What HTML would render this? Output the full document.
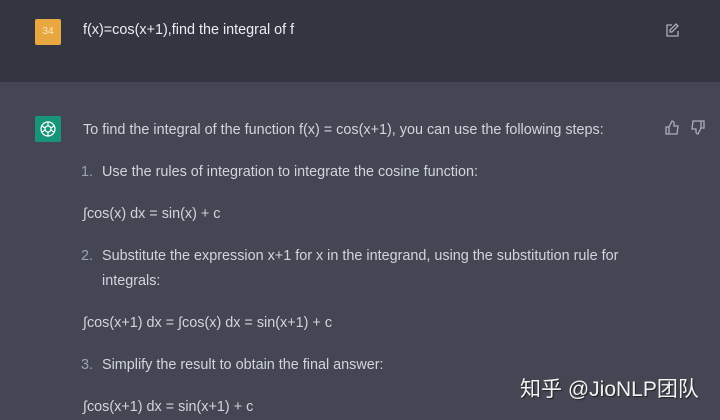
<!DOCTYPE html>
<html><head><style>
body{margin:0;width:720px;height:420px;overflow:hidden;font-family:"Liberation Sans",sans-serif;color:#d1d5db;font-size:14.4px;}
.top{position:absolute;left:0;top:0;width:720px;height:82px;background:#343541;}
.bot{position:absolute;left:0;top:82px;width:720px;height:338px;background:#444654;}
.av{position:absolute;width:26px;height:26px;border-radius:2px;}
.t{position:absolute;left:83px;white-space:nowrap;}
.n{position:absolute;left:81px;color:#9ca3af;}
.wm{position:absolute;left:520px;top:373px;font-size:21px;color:#f2f2f2;font-family:"Liberation Sans","Noto Sans CJK SC",sans-serif;text-shadow:1px 1px 1px #222;}
</style></head><body>
<div class="top"></div><div class="bot"></div>
<div class="av" style="left:35px;top:19px;background:#e9a73f;color:#fbe7c6;font-size:10px;text-align:center;line-height:26px;">34</div>
<div class="t" style="top:22px;color:#ececf1">f(x)=cos(x+1),find the integral of f</div>
<svg style="position:absolute;left:665px;top:23px" width="15" height="14" viewBox="0 0 15 14" fill="none" stroke="#acacbe" stroke-width="1.3"><path d="M7 2H2v11h11V8"/><path d="M11 1l2 2-6 6H5V7z"/></svg>
<div class="av" style="left:35px;top:116px;background:#10a37f;opacity:.85"></div>
<svg style="position:absolute;left:38px;top:119px" width="20" height="20" viewBox="0 0 20 20" fill="none" stroke="#fff" stroke-width="1.2"><circle cx="10" cy="10" r="7"/><circle cx="10" cy="10" r="3"/><path d="M10 3v4M16 7l-3 2M16 13l-3-2M10 17v-4M4 13l3-2M4 7l3 2"/></svg>
<svg style="position:absolute;left:665px;top:120px" width="15" height="15" viewBox="0 0 15 15" fill="none" stroke="#acacbe" stroke-width="1.3"><path d="M1 7h3v7H1zM4 7l3-6c1 0 2 1 2 2v3h4l-1 8H4"/></svg>
<svg style="position:absolute;left:690px;top:120px" width="15" height="15" viewBox="0 0 15 15" fill="none" stroke="#acacbe" stroke-width="1.3"><path d="M14 8h-3V1h3zM11 8l-3 6c-1 0-2-1-2-2V9H2l1-8h8"/></svg>
<div class="t" style="top:122px">To find the integral of the function f(x) = cos(x+1), you can use the following steps:</div>
<div class="n" style="top:164px">1.</div><div class="t" style="left:102px;top:164px">Use the rules of integration to integrate the cosine function:</div>
<div class="t" style="top:206px">∫cos(x) dx = sin(x) + c</div>
<div class="n" style="top:248px">2.</div><div class="t" style="left:102px;top:248px">Substitute the expression x+1 for x in the integrand, using the substitution rule for</div>
<div class="t" style="left:102px;top:273px">integrals:</div>
<div class="t" style="top:315px">∫cos(x+1) dx = ∫cos(x) dx = sin(x+1) + c</div>
<div class="n" style="top:357px">3.</div><div class="t" style="left:102px;top:357px">Simplify the result to obtain the final answer:</div>
<div class="t" style="top:399px">∫cos(x+1) dx = sin(x+1) + c</div>
<div class="wm">知乎 @JioNLP团队</div>
</body></html>
